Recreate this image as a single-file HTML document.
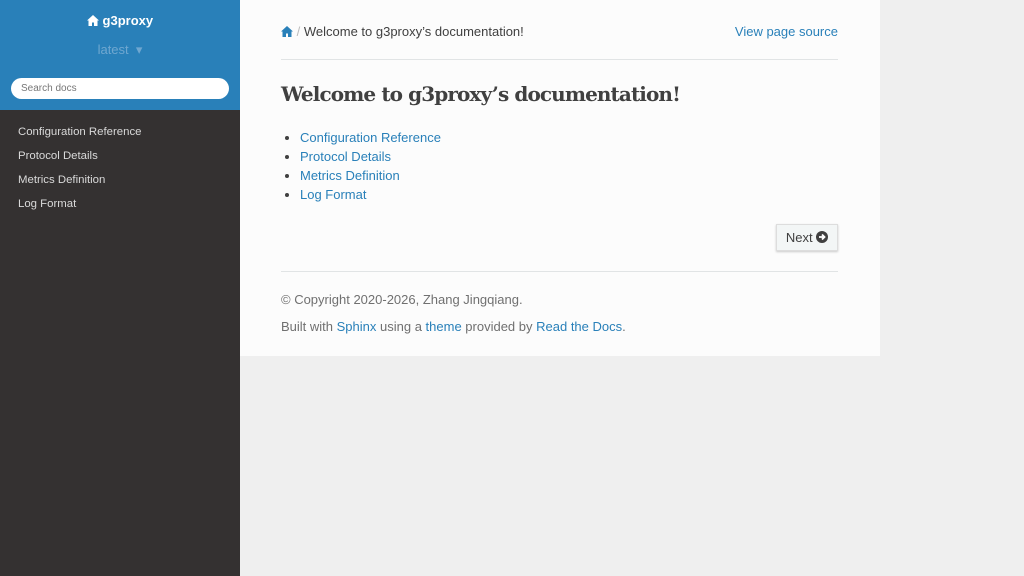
<!DOCTYPE html>
<html><head><meta charset="utf-8"><style>
body{margin:0;width:1024px;height:576px;background:#efefef;font-family:"Liberation Sans",sans-serif;overflow:hidden;position:relative}
.side{position:absolute;left:0;top:0;width:240px;height:576px;background:#343131}
.top{background:#2980b9;height:110px;text-align:center}
.brand{color:#fff;font-weight:bold;font-size:13px;padding-top:13px}
.ver{color:#6fa7d0;font-size:13px;margin-top:14px}
.search{position:absolute;left:11px;top:78px;width:218px;height:21px;background:#fff;border-radius:11px;font-size:10px;color:#777;line-height:21px;box-sizing:border-box;padding-left:10px}
.nav{padding-top:10px}
.nav div{color:#d9d9d9;font-size:11.4px;padding-left:18px;height:24px;line-height:24px}
.main{position:absolute;left:240px;top:0;width:640px;height:356px;background:#fcfcfc}
a{color:#2980b9;text-decoration:none}
.bc{position:absolute;left:41px;top:24px;font-size:13px;color:#404040;width:557px}
.bc .r{position:absolute;right:0;top:0}
hr{position:absolute;left:41px;width:557px;border:0;border-top:1px solid #e1e4e5;margin:0}
h1{position:absolute;left:41px;top:82px;margin:0;font-family:"DejaVu Serif",serif;font-size:20px;color:#404040;font-weight:bold;letter-spacing:-0.9px;white-space:nowrap}
ul{position:absolute;left:41px;top:128px;margin:0;padding-left:19px;font-size:13px;line-height:19px;color:#404040}
.btn{position:absolute;left:536px;top:224px;width:62px;height:27px;background:#f3f6f6;border:1px solid #ddd;box-shadow:0 1px 2px rgba(0,0,0,.2);font-size:13px;color:#404040;line-height:25px;text-align:center;box-sizing:border-box}
.foot{position:absolute;left:41px;font-size:13px;color:#707070}
svg{vertical-align:-1px}
</style></head><body>
<div class="side">
<div class="top"><div class="brand"><svg width="12" height="11" viewBox="0 0 12 11"><path d="M6 0L0 5.5h1.5V11h3.5V7.5h2V11h3.5V5.5H12z" fill="#fff"/></svg> g3proxy</div><div class="ver">latest &nbsp;▾</div></div>
<div class="search">Search docs</div>
<div class="nav"><div>Configuration Reference</div><div>Protocol Details</div><div>Metrics Definition</div><div>Log Format</div></div>
</div>
<div class="main">
<div class="bc"><svg width="12" height="11" viewBox="0 0 12 11"><path d="M6 0L0 5.5h1.5V11h3.5V7.5h2V11h3.5V5.5H12z" fill="#2980b9"/></svg> <span style="color:#bbb">/</span> Welcome to g3proxy’s documentation!<a class="r">View page source</a></div>
<hr style="top:59px">
<h1>Welcome to g3proxy’s documentation!</h1>
<ul><li><a>Configuration Reference</a></li><li><a>Protocol Details</a></li><li><a>Metrics Definition</a></li><li><a>Log Format</a></li></ul>
<div class="btn">Next <svg width="12" height="12" viewBox="0 0 12 12"><circle cx="6" cy="6" r="6" fill="#404040"/><path d="M3 6h5M6 3.5L8.5 6 6 8.5" stroke="#fff" stroke-width="1.8" fill="none"/></svg></div>
<hr style="top:271px">
<div class="foot" style="top:292px">© Copyright 2020-2026, Zhang Jingqiang.</div>
<div class="foot" style="top:319px">Built with <a>Sphinx</a> using a <a>theme</a> provided by <a>Read the Docs</a>.</div>
</div>
</body></html>
